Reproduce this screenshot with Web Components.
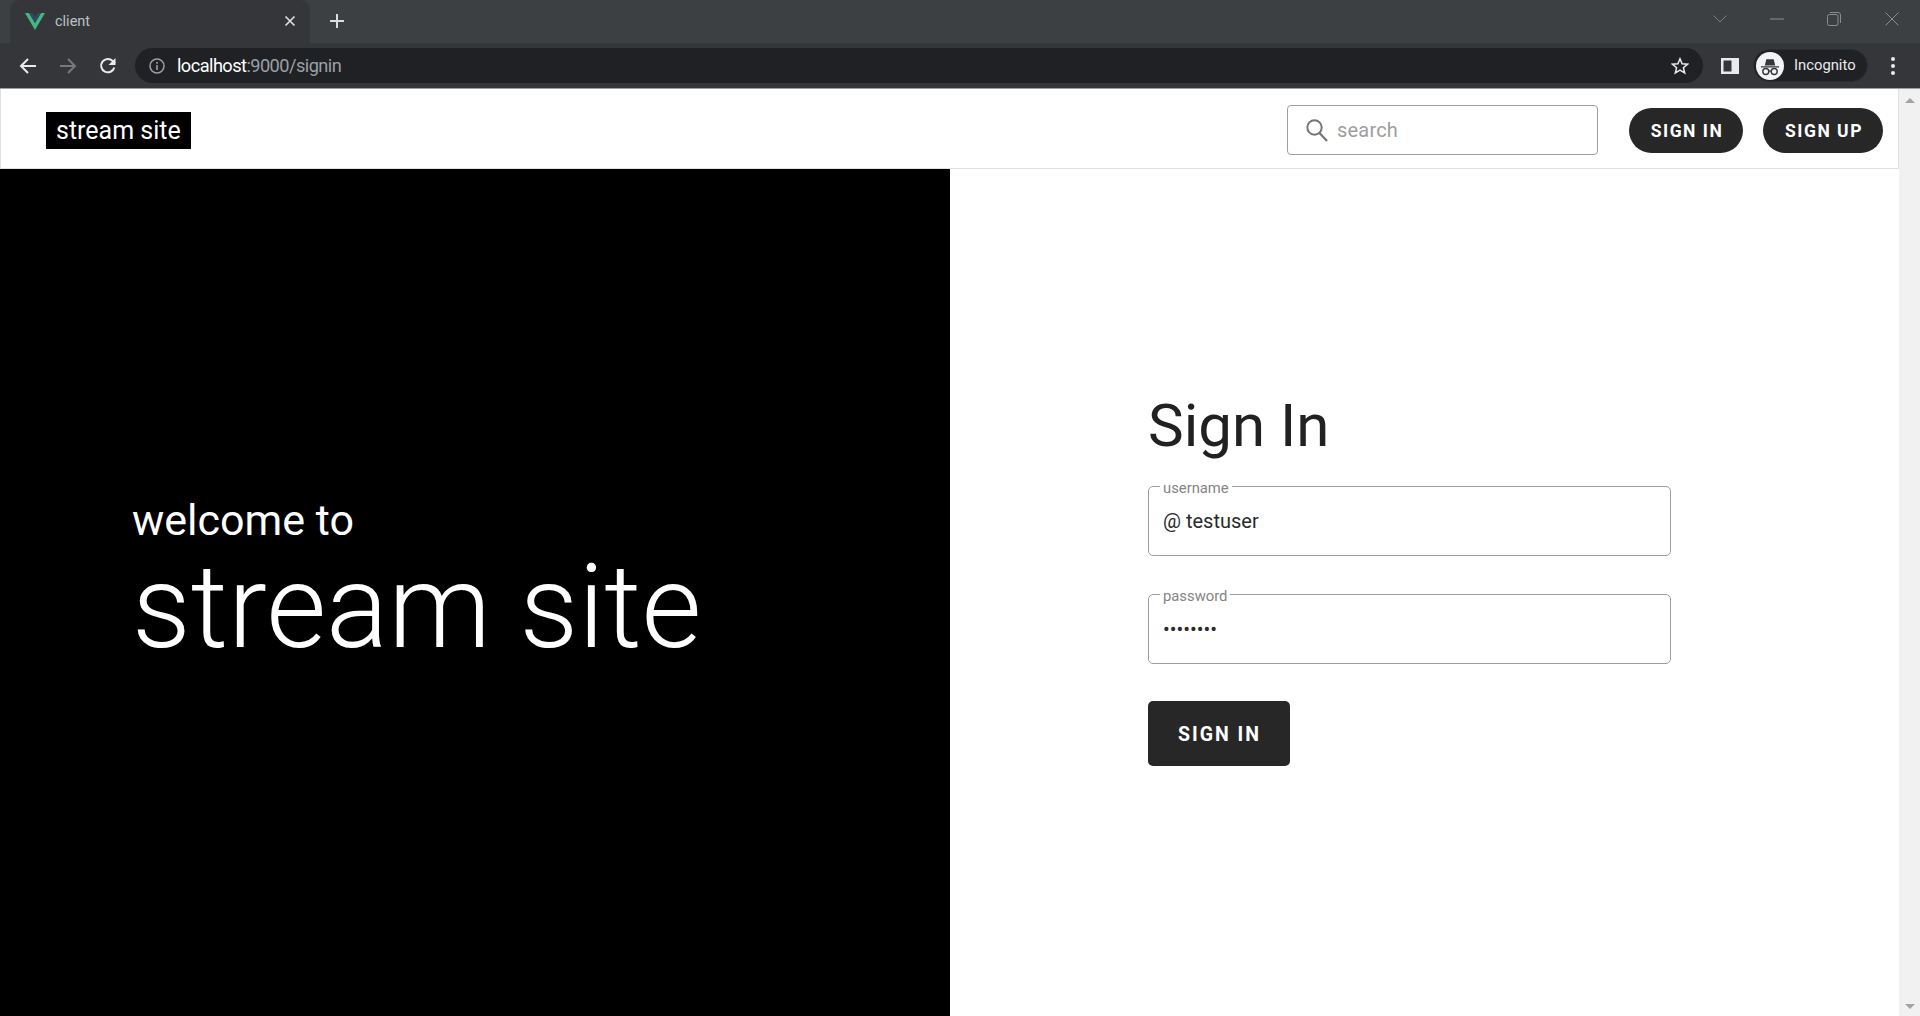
<!DOCTYPE html>
<html><head><meta charset="utf-8"><title>client</title>
<style>
html,body{margin:0;height:100%;overflow:hidden;background:#fff;font-family:Roboto,sans-serif}
body{display:flex;flex-direction:column;height:1016px}
</style></head><body>
<browser-chrome></browser-chrome>
<page-shell>
  <app-header></app-header>
  <signin-view></signin-view>
</page-shell>
<script>
function def(name, html){
  customElements.define(name, class extends HTMLElement{
    constructor(){super();this.attachShadow({mode:'open'}).innerHTML=html(this);}
  });
}
def('browser-chrome',()=>`<style>
:host{display:block;flex:none;height:89px;font-family:"Open Sans","Noto Sans",sans-serif;color:#fff}
*{box-sizing:border-box}
svg{display:block;flex:none}
.strip{height:43px;background:#3c4043;display:flex;align-items:flex-end;padding-left:10px;position:relative}
.tab{width:300px;height:43px;background:#35363a;border-radius:10px 10px 0 0;display:flex;align-items:center;padding:0 14px 1px 15px;position:relative;font:14px "Roboto",sans-serif;color:#bdc1c6}
.tab .t{margin-left:10px;flex:1;font-size:14.5px}
.plus{margin:0 0 0 19px;align-self:center;margin-top:-1px}
.wctl{margin-left:auto;display:flex;align-items:center;height:43px;padding-bottom:6px}
.tool{height:45px;background:#35363a;display:flex;align-items:center;padding-left:19px;border-bottom:0}
.omni{margin-left:18px;width:1568px;height:35px;border-radius:18px;background:#202124;display:flex;align-items:center;padding:0 14px 0 14px}
.url{margin-left:12px;font:18.2px Roboto,sans-serif;letter-spacing:-.55px;color:#9aa0a6}
.url b{font-weight:400;color:#fff}
.inc{margin-left:14px;width:115px;height:33px;background:#202124;border-radius:17px;border:1px solid #2c2d30;display:flex;align-items:center;padding-left:2px;font:14.8px Roboto,sans-serif;color:#e8eaed}
.inc span{margin-left:10px;padding-bottom:2px}
.line{height:1px;background:#9aa0a6}
</style>
<div class="strip">
  <div class="tab">
    <svg width="20" height="18" viewBox="0 0 20 18"><path d="M0 1h4l6 10 6-10h4L10 18z" fill="#41b883"/><path d="M4 1h3.5L10 5.2 12.5 1H16l-6 10z" fill="#34495e"/></svg>
    <span class="t">client</span>
    <svg width="12" height="12" viewBox="0 0 12 12" style="margin-right:0"><path d="M1.5 1.5l9 9M10.5 1.5l-9 9" stroke="#dadce0" stroke-width="1.7"/></svg>
  </div>
  <svg class="plus" width="16" height="16" viewBox="0 0 16 16"><path d="M8 1v14M1 8h14" stroke="#dadce0" stroke-width="2"/></svg>
  <div class="wctl">
    <svg width="14" height="10" viewBox="0 0 14 10" style="margin-right:43px"><path d="M.5 1.5L7 8l6.5-6.5" fill="none" stroke="#7b7f84" stroke-width="1"/></svg>
    <svg width="14" height="2" viewBox="0 0 14 2" style="margin-right:43px"><path d="M0 1h14" stroke="#8a8e92"/></svg>
    <svg width="14" height="14" viewBox="0 0 14 14" style="margin-right:44px"><rect x=".5" y="2.5" width="10.5" height="11" rx="2" fill="none" stroke="#8a8e92"/><path d="M3 .5h8a2.5 2.5 0 0 1 2.5 2.5v8" fill="none" stroke="#8a8e92"/></svg>
    <svg width="14" height="14" viewBox="0 0 14 14" style="margin-right:21px"><path d="M.5.5l13 13M13.500.5l-13 13" stroke="#8a8e92"/></svg>
  </div>
</div>
<div class="tool">
  <svg width="18" height="18" viewBox="0 0 18 18"><path d="M17 9H2.500M9 2L2 9l7 7" fill="none" stroke="#e8eaed" stroke-width="2"/></svg>
  <svg width="18" height="18" viewBox="0 0 18 18" style="margin-left:22px"><path d="M1 9h14.500M9 2l7 7-7 7" fill="none" stroke="#76797d" stroke-width="2"/></svg>
  <svg width="18" height="18" viewBox="0 0 18 18" style="margin-left:22px"><path d="M15.300 10.500A6.700 6.700 0 1 1 13.700 4L16 6.200" fill="none" stroke="#e8eaed" stroke-width="2"/><path d="M16.500 1v7h-7z" fill="#e8eaed"/></svg>
  <div class="omni">
    <svg width="16" height="16" viewBox="0 0 16 16"><circle cx="8" cy="8" r="7" fill="none" stroke="#9aa0a6" stroke-width="1.500"/><path d="M8 7v5M8 4v1.800" stroke="#9aa0a6" stroke-width="1.600"/></svg>
    <span class="url"><b>localhost</b>:9000/signin</span>
    <svg width="18" height="18" viewBox="0 0 18 18" style="margin-left:auto"><path d="M9 1.800l2.100 5 5.400.4-4.100 3.500 1.300 5.300L9 13.200 4.300 16l1.300-5.300L1.500 7.200l5.400-.4z" fill="none" stroke="#e8eaed" stroke-width="1.500"/></svg>
  </div>
  <svg width="18" height="16" viewBox="0 0 18 16" style="margin-left:18px"><path fill-rule="evenodd" d="M0 0h18v16H0zM2.500 2.500v11h8v-11z" fill="#e8eaed"/></svg>
  <div class="inc">
    <svg width="28" height="28" viewBox="0 0 28 28"><circle cx="14" cy="14" r="14" fill="#f1f3f4"/><path d="M5 14.300h18v1.300H5zM8.800 13.500l1.500-6.200h7.400l1.500 6.200z" fill="#35363a"/><circle cx="9.800" cy="19.500" r="3" fill="none" stroke="#35363a" stroke-width="1.400"/><circle cx="18.200" cy="19.500" r="3" fill="none" stroke="#35363a" stroke-width="1.400"/><path d="M12.800 19.300c.8-.6 1.600-.6 2.400 0" fill="none" stroke="#35363a" stroke-width="1.200"/></svg>
    <span>Incognito</span>
  </div>
  <svg width="4" height="18" viewBox="0 0 4 18" style="margin-left:23px"><circle cx="2" cy="2" r="2" fill="#e8eaed"/><circle cx="2" cy="9" r="2" fill="#e8eaed"/><circle cx="2" cy="16" r="2" fill="#e8eaed"/></svg>
</div>
<div class="line"></div>`);

def('page-shell',()=>`<style>
:host{display:flex;flex:1;min-height:0}
.main{flex:1;min-width:0;display:flex;flex-direction:column}
.sb{width:21px;flex:none;background:#f1f1f1;display:flex;flex-direction:column;justify-content:space-between;align-items:center;padding:9px 0 7px 0;box-sizing:border-box}
.a{width:0;height:0;border-left:5px solid transparent;border-right:5px solid transparent}
.u{border-bottom:5px solid #a3a3a3}.d{border-top:5px solid #a3a3a3}
</style><div class="main"><slot></slot></div><div class="sb"><div class="a u"></div><div class="a d"></div></div>`);

def('pill-btn',()=>`<style>
:host{display:inline-flex;align-items:center;justify-content:center;height:45px;padding:1px 0 0 2px;border-radius:23px;background:#272727;color:#fff;font:700 17.5px Roboto,sans-serif;letter-spacing:1.5px;box-sizing:border-box}
</style><slot></slot>`);

def('app-header',()=>`<style>
:host{display:flex;flex:none;align-items:center;height:80px;box-sizing:border-box;border-left:1px solid #e0e0e0;border-right:1px solid #e0e0e0;border-bottom:1px solid #e0e0e0;padding:3px 15px 0 45px;background:#fff}
.brand{background:#000;color:#fff;font:400 25px Roboto,sans-serif;height:37px;line-height:37px;padding:0 10px;width:145px;box-sizing:border-box;white-space:nowrap}
.search{margin-left:auto;width:311px;height:50px;box-sizing:border-box;border:1px solid #9e9e9e;border-radius:4px;display:flex;align-items:center;padding-left:18px;font:20px Roboto,sans-serif;color:#9e9e9e}
.search span{margin-left:9px;letter-spacing:.2px}
pill-btn{margin-left:20px}
.first{margin-left:31px;width:114px}
.second{width:120px}
</style>
<div class="brand">stream site</div>
<div class="search"><svg width="22" height="23" viewBox="0 0 22 23"><circle cx="8.500" cy="8.500" r="7.200" fill="none" stroke="#757575" stroke-width="2"/><path d="M13.500 14l7.500 8" stroke="#757575" stroke-width="2.200"/></svg><span>search</span></div>
<pill-btn class="first">SIGN IN</pill-btn><pill-btn class="second">SIGN UP</pill-btn>`);

def('text-field',(h)=>`<style>
:host{display:block;width:523px;height:70px;position:relative}
fieldset{margin:0;padding:0 0 0 10px;box-sizing:border-box;height:70px;border:1px solid #9e9e9e;border-radius:5px;display:flex;align-items:center}
legend{padding:0 3px;font:14.800px Roboto,sans-serif;color:#858585;line-height:1;height:1px;overflow:visible;position:relative;top:-5px;margin-left:1px}
.v{margin:-1px 0 0 4px;font:20px Roboto,sans-serif;color:#2a2a2a;display:block;padding-top:0}
</style><fieldset><legend>${h.getAttribute('label')}</legend><div class="v"><slot></slot></div></fieldset>`);

def('signin-view',()=>`<style>
:host{display:flex;flex:1;min-height:0}
.hero{width:950px;flex:none;background:#000;color:#fff;display:flex;flex-direction:column;justify-content:center;padding:0 0 26px 132px;box-sizing:border-box}
.w{font:400 43px/52px Roboto,sans-serif}
.s{font:300 116px/116px Roboto,sans-serif;letter-spacing:0;white-space:nowrap;margin-top:3px}
.form{flex:1;display:flex;flex-direction:column;justify-content:center;padding:0 0 28px 198px}
h1{margin:0 0 25px;font:400 60px/70px Roboto,sans-serif;color:#212121}
text-field+text-field{margin-top:38px}
.b{margin-top:37px;width:142px;height:65px;padding:2px 0 0 1px;box-sizing:border-box;background:#272727;color:#fff;border-radius:5px;display:flex;align-items:center;justify-content:center;font:700 19.500px Roboto,sans-serif;letter-spacing:2px}
</style>
<div class="hero"><div class="w">welcome to</div><div class="s">stream site</div></div>
<div class="form">
  <h1>Sign In</h1>
  <text-field label="username">@ testuser</text-field>
  <text-field label="password">••••••••</text-field>
  <div class="b">SIGN IN</div>
</div>`);
</script>
</body></html>
